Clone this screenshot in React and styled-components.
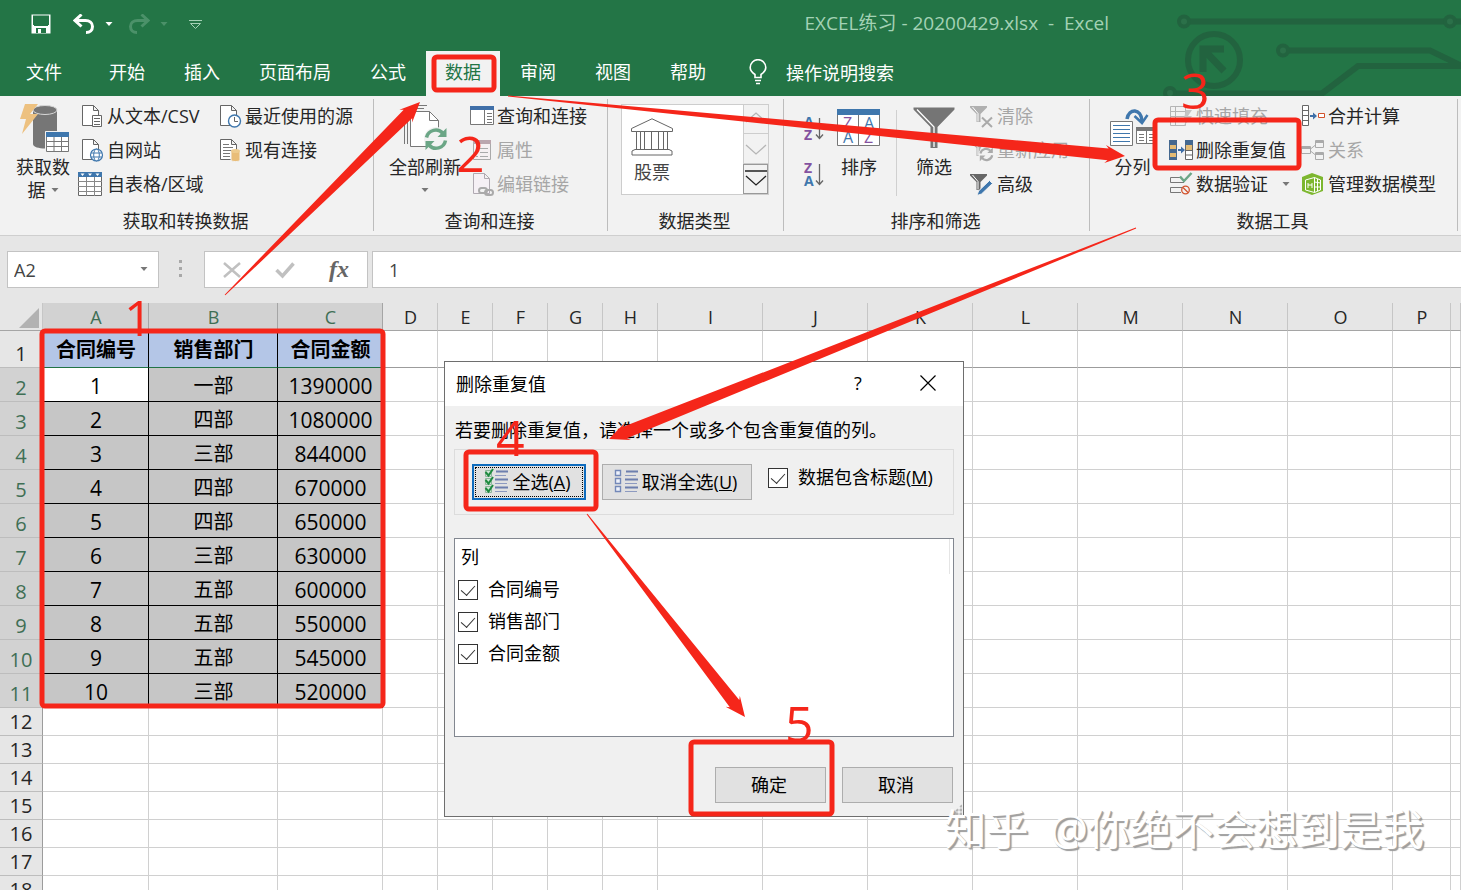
import React from "react";
import styled, { createGlobalStyle, css } from "styled-components";

const GlobalStyle = createGlobalStyle`
  * {
    box-sizing: border-box;
  }
  body {
    margin: 0;
    font-family: "Open Sans", "Noto Sans CJK SC", sans-serif;
    font-size: 18px;
    color: #262626;
  }
  button, input {
    font: inherit;
    color: inherit;
    border: 0;
    background: none;
    padding: 0;
    margin: 0;
  }
`;

/* ---------- icons ---------- */

const SaveIcon = () => (
  <svg width="20" height="20" viewBox="0 0 20 20">
    <path d="M0.500 0.500h19v19h-19z" fill="#fff" />
    <path d="M2 1.500h16v9.500h-1v1H3v-1H2z" fill="#237546" />
    <path d="M5 14h10v5H5z" fill="#237546" />
    <path d="M7 15h3v4H7z" fill="#fff" />
  </svg>
);

const UndoIcon = ({ flip, color }) => (
  <svg width="22" height="20" viewBox="0 0 22 20">
    <g
      transform={flip ? "translate(22 0) scale(-1 1)" : undefined}
      fill="none"
      stroke={color}
      strokeWidth="3"
    >
      <path d="M8.500 0.500L2 6.500l6.500 6" />
      <path d="M2 6.500h10.500c4 0 7 2.500 7 6 0 3.500-2.500 6-6.500 6" />
    </g>
  </svg>
);

const Caret = ({ color = "#777" }) => (
  <svg width="8" height="5" viewBox="0 0 8 5">
    <path d="M0.500 0h7L4 4z" fill={color} />
  </svg>
);

const CustomizeIcon = () => (
  <svg width="13" height="11" viewBox="0 0 13 11" fill="none" stroke="#a3d2b5">
    <path d="M0 1.500h13M1.500 4.500h10l-5 5z" />
  </svg>
);

const BulbIcon = () => (
  <svg width="18" height="26" viewBox="0 0 18 26" fill="none" stroke="#fff" strokeWidth="1.600">
    <path d="M6 18.500v-3C3 13.500 1.200 11.500 1.200 8.500a7.800 7.800 0 0 1 15.600 0c0 3-1.800 5-4.800 7v3z" />
    <path d="M6 21.500h6M7 24.500h4" />
  </svg>
);

const Circuit = () => (
  <svg width="301" height="96" viewBox="0 0 301 96" fill="none" stroke="#22633f" strokeWidth="6">
    <path d="M30 21.500h271M129 50.500h141l31 15M16 93.500h146l36-27.500h103" />
    <g fill="#2b7049" strokeWidth="4">
      <circle cx="24" cy="21.500" r="5" />
      <circle cx="290" cy="21.500" r="5" />
      <circle cx="123" cy="50.500" r="5" />
      <circle cx="10" cy="93" r="5" />
    </g>
    <circle cx="54" cy="60" r="26" />
    <path d="M43 72V49h21M44 50l20 21" strokeWidth="7" />
  </svg>
);

const Sheet = ({ stroke = "#666" }) => (
  <path d="M2.500 1.500h11l5 5v15h-16zM13.500 1.500v5h5" fill="#fff" stroke={stroke} />
);

const Drawing = styled.svg`
  overflow: visible;
`;

const Icon = ({ children, w = 24, h = 24 }) => (
  <Drawing width={w} height={h} viewBox={`0 0 ${w} ${h}`} fill="none">
    {children}
  </Drawing>
);

const GetDataIcon = () => (
  <Icon w={52} h={50}>
    <path d="M16 7v34c0 6 24 6 24 0V7z" fill="#767676" />
    <ellipse cx="28" cy="7" rx="12" ry="4.500" fill="#767676" stroke="#d8d8d8" />
    <path d="M8 1h13l-8 10h8L5 31l4-15H3z" fill="#edc180" />
    <path d="M28.500 28.500h23v21h-23z" fill="#fff" stroke="#f2f2f2" />
    <path d="M29.500 29.500h22v19h-22z" fill="#fff" stroke="#777" />
    <path d="M29 29h23v5H29z" fill="#3f77ad" />
    <path d="M29 38.500h23M29 43.500h23M37 34v15M44.500 34v15" stroke="#777" />
  </Icon>
);

const TextFileIcon = () => (
  <Icon>
    <Sheet />
    <path d="M12.500 11.500h9v11h-9z" fill="#fff" stroke="#666" />
    <path d="M14 14.500h6M14 17.500h6M14 20.500h6" stroke="#666" />
  </Icon>
);

const WebIcon = () => (
  <Icon>
    <Sheet />
    <circle cx="16.500" cy="17" r="6" fill="#fff" stroke="#3f77ad" strokeWidth="1.200" />
    <ellipse cx="16.500" cy="17" rx="2.800" ry="6" stroke="#3f77ad" />
    <path d="M11 15h11M11 19h11" stroke="#3f77ad" />
  </Icon>
);

const TableIcon = () => (
  <Icon>
    <path d="M-1.500 0.500h23v23h-23z" fill="#fff" stroke="#666" />
    <path d="M-2 0h24v5H-2z" fill="#3f77ad" />
    <path d="M0.500 1.500h4l-2 2.500zM8 1.500h4l-2 2.500zM15.500 1.500h4l-2 2.500z" fill="#fff" />
    <path d="M-2 9.500h24M-2 14.500h24M-2 19.500h24M6.500 5v19M14.500 5v19" stroke="#888" />
  </Icon>
);

const RecentIcon = () => (
  <Icon>
    <Sheet />
    <circle cx="16.500" cy="17" r="6" fill="#fff" stroke="#3f77ad" strokeWidth="1.400" />
    <path d="M16.500 13v4.500h3.500" stroke="#666" />
  </Icon>
);

const ConnectionIcon = () => (
  <Icon>
    <Sheet />
    <path d="M5 6.500h6M5 9.500h10M5 12.500h10M5 15.500h7M5 18.500h7" stroke="#777" />
    <path d="M13 13v9c0 2 9 2 9 0v-9z" fill="#e9bd78" stroke="#f2f2f2" />
    <ellipse cx="17.500" cy="13" rx="4.500" ry="2" fill="#eecb8d" />
  </Icon>
);

const RefreshArrows = ({ color }) => (
  <g stroke={color} strokeWidth="3.500" fill="none">
    <path d="M1.500 9.500A9.500 9.500 0 0 1 18 5.500" />
    <path d="M20.500 12.500A9.500 9.500 0 0 1 4 17" />
    <path d="M21.500 0v9h-9zM0.500 22v-9h9z" fill={color} stroke="none" />
  </g>
);

const RefreshAllIcon = () => (
  <Icon w={44} h={48}>
    <path d="M1.500 10v30M4.500 8v32M7 4.500h14M10 1.500h14" stroke="#777" />
    <path d="M7.500 7.500h19l9 9v26h-28z" fill="#fff" stroke="#777" />
    <path d="M26.500 7.500v9h9" stroke="#777" />
    <circle cx="33" cy="35" r="12" fill="#f2f2f2" />
    <g transform="translate(22 24)">
      <RefreshArrows color="#6ba686" />
    </g>
  </Icon>
);

const QueriesIcon = () => (
  <Icon>
    <path d="M0.500 2.500h23v18h-23z" fill="#fff" stroke="#777" />
    <path d="M0 2h24v4H0z" fill="#3f6fa8" />
    <path d="M14.500 6v15M17 9.500h5M17 12.500h5M17 15.500h5M17 18.500h5" stroke="#777" />
  </Icon>
);

const PropertiesIcon = () => (
  <Icon>
    <path d="M3.500 2.500h17v19h-17z" fill="#f6f0f2" stroke="#aaa" />
    <path d="M3 2h18v4H3z" fill="#bba6ae" />
    <path d="M10 10.500h8M10 14.500h8M10 18.500h8M6 10.500h2M6 14.500h2M6 18.500h2" stroke="#aaa" />
  </Icon>
);

const EditLinksIcon = () => (
  <Icon>
    <path d="M3.500 1.500h11l5 5v15h-16zM14.500 1.500v5h5" fill="#f5f0f5" stroke="#b0aab2" />
    <rect x="9" y="16" width="8" height="5" rx="2.500" fill="#f2f2f2" stroke="#aaa" strokeWidth="2" />
    <rect x="15" y="18" width="8" height="5" rx="2.500" stroke="#aaa" strokeWidth="2" />
  </Icon>
);

const BankIcon = () => (
  <Icon w={42} h={38}>
    <g stroke="#666" fill="#fff">
      <path d="M0.500 10.500L21 0.800l20.500 9.700v3h-41z" />
      <path d="M5.500 13.500h4v18h-4zM13.500 13.500v18M20.500 13.500v18M27.500 13.500v18M32.500 13.500h4v18h-4z" />
      <path d="M1 37v-4l3-1.500h34l3 1.500v4z" />
    </g>
  </Icon>
);

const Letter = styled.text`
  font: ${(p) => (p.$bold ? "bold 14px" : "16px")} "Open Sans", sans-serif;
  fill: ${(p) => p.$color};
`;

const SortIcon = ({ top, bottom, topColor, bottomColor }) => (
  <Icon w={22} h={28}>
    <Letter $bold $color={topColor} x="1" y="12">{top}</Letter>
    <Letter $bold $color={bottomColor} x="1" y="25">{bottom}</Letter>
    <path d="M16.500 3v20M13 19.500l3.500 4 3.500-4" stroke="#666" strokeWidth="1.300" />
  </Icon>
);

const SortDialogIcon = () => (
  <Icon w={44} h={38}>
    <path d="M0.500 0.500h42v36h-42z" fill="#fff" stroke="#777" />
    <path d="M0 0h43v6H0z" fill="#3f77ad" />
    <path d="M21.500 6v31" stroke="#777" />
    <Letter $color="#8452a0" x="6" y="20">Z</Letter>
    <Letter $color="#3f77ad" x="6" y="34">A</Letter>
    <Letter $color="#3f77ad" x="27" y="20">A</Letter>
    <Letter $color="#8452a0" x="27" y="34">Z</Letter>
  </Icon>
);

const FilterIcon = () => (
  <Icon w={42} h={42}>
    <path d="M0.500 0.500h41v2L24.500 20v21h-7V20L0.500 2.500z" fill="#757575" />
    <path d="M4 2.500l17 17.500v20" stroke="#fff" strokeWidth="1.300" />
  </Icon>
);

const SmallFunnel = ({ color }) => (
  <>
    <path d="M0 2h17v1.500L10.500 10v8h-4v-8L0 3.500z" fill={color} />
    <path d="M2.500 3l5.500 6.500v8" stroke="#fff" />
  </>
);

const ClearIcon = () => (
  <Icon>
    <SmallFunnel color="#b0b0b0" />
    <path d="M12 13.500l10 9.500M22 13.500L12 23" stroke="#aaa" strokeWidth="2" />
  </Icon>
);

const ReapplyIcon = () => (
  <Icon>
    <SmallFunnel color="#b0b0b0" />
    <circle cx="16" cy="16.500" r="7.500" fill="#f2f2f2" />
    <g transform="translate(9.500 9.500) scale(0.620)">
      <RefreshArrows color="#aaa" />
    </g>
  </Icon>
);

const AdvancedIcon = () => (
  <Icon>
    <SmallFunnel color="#666" />
    <path d="M7 23.500l1.500-4.500L19.500 8.500l3 3L11.500 22z" fill="#3f77ad" stroke="#f2f2f2" />
  </Icon>
);

const SplitIcon = () => (
  <Icon w={46} h={40}>
    <path d="M0.500 13.500h22v24h-22z" fill="#fff" stroke="#777" />
    <path d="M3 17.500h17M3 21.500h17M3 25.500h17M3 29.500h17M3 33.500h17" stroke="#3f77ad" />
    <path d="M26.500 19.500h19v16h-19z" fill="#fff" stroke="#777" />
    <path d="M26 19h20v4H26z" fill="#777" />
    <path d="M36.500 23v13M29 26.500h5M29 29.500h5M29 32.500h5M39 26.500h5M39 29.500h5M39 32.500h5" stroke="#777" />
    <path d="M17 11C19 0 31 0 32 13" stroke="#3f77ad" strokeWidth="3.500" />
    <path d="M24.500 8l7.500 7 5.500-8" stroke="#3f77ad" strokeWidth="2.500" />
  </Icon>
);

const FlashFillIcon = () => (
  <Icon>
    <path d="M1.500 2.500h15v19h-15zM1.500 7.500h15M1.500 12.500h15M1.500 17.500h15M6.500 2.500v19" stroke="#b5b5b5" />
    <path d="M17 6h6l-4 6h4l-8 10 3-8h-3z" fill="#c4c4c4" />
  </Icon>
);

const DedupeIcon = () => (
  <Icon>
    <path d="M0 2h8v20H0z" fill="#44688f" />
    <path d="M1 7h6v4H1zM1 15h6v4H1z" fill="#e3bb74" />
    <path d="M9 11h3V8.500l4 3.500-4 3.500V13H9z" fill="#3f6fa8" />
    <path d="M16.500 2.500h7v19h-7zM16.500 12.500h7M16.500 17h7" fill="#fff" stroke="#666" />
    <path d="M16 2h8v5h-8z" fill="#44688f" />
    <path d="M17 7h6v5h-6z" fill="#e3bb74" />
  </Icon>
);

const ValidateIcon = () => (
  <Icon>
    <path d="M11 5.500H1.500v5H15M13 15.500H1.500v5H12" stroke="#777" />
    <path d="M11 4.500l4 4.500L22.500 1" stroke="#6ba686" strokeWidth="2.500" />
    <circle cx="16.500" cy="18" r="3.800" stroke="#d2532d" strokeWidth="1.300" />
    <path d="M14 15.500l5 5" stroke="#d2532d" strokeWidth="1.300" />
  </Icon>
);

const ConsolidateIcon = () => (
  <Icon>
    <path d="M1.500 1.500h6v20h-6zM1.500 6.500h6M1.500 11.500h6M1.500 16.500h6" fill="#fff" stroke="#666" />
    <path d="M9 11h3V8.500l4 3.500-4 3.500V13H9z" fill="#3f6fa8" />
    <path d="M17.500 9.500h6v4h-6z" fill="#fff" stroke="#d2532d" />
  </Icon>
);

const RelationIcon = () => (
  <Icon>
    <path d="M0.500 8.500h9v7h-9zM14.500 2.500h8v7h-8zM14.500 14.500h8v7h-8z" stroke="#aaa" />
    <path d="M0.500 10h9M14.500 4h8M14.500 16h8" stroke="#aaa" strokeWidth="2" />
    <path d="M9.500 11l5-4M9.500 13l5 4" stroke="#aaa" />
  </Icon>
);

const ModelIcon = () => (
  <Icon>
    <path d="M1 5L11 1l11 4v14l-11 4L1 19z" fill="#7db72f" />
    <path d="M4.500 8l9-2.500v15l-9-2.500z" stroke="#fff" />
    <path d="M13.500 5.500l6 2.500v10l-6 2.500M7 11v5M7 13h4M11 11v5M16.500 7v12M13.500 10l6 1M13.500 15h6" stroke="#fff" />
  </Icon>
);

const ChecklistIcon = ({ checked }) => (
  <Icon w={24} h={24}>
    {[1, 9, 17].map((y) =>
      checked ? (
        <g key={y}>
          <path d={`M1.500 ${y + 0.500}h6v6h-6z`} fill="#cfe6d6" stroke="#8fb59c" />
          <path d={`M1.500 ${y + 2}l3 3.500L9 ${y - 1}`} stroke="#1e8a3f" strokeWidth="2" />
        </g>
      ) : (
        <path key={y} d={`M1.500 ${y + 0.500}h5v5h-5z`} fill="#eef2fb" stroke="#7388b8" strokeWidth="1.400" />
      )
    )}
    <path d="M12 2.500h12M11 10.500h13M11 18.500h13" stroke="#6d7fae" strokeWidth="2" />
    <path d="M11 6.500h11M11 14.500h12M11 22.500h12" stroke="#8d9ac0" />
  </Icon>
);

const Chevron = ({ up, bar, color }) => (
  <Icon w={22} h={18}>
    {bar && <path d="M0 1h22" stroke={color} strokeWidth="1.500" />}
    <path d={up ? "M1 12L11 3l10 9" : "M1 6l10 9 10-9"} stroke={color} strokeWidth="1.300" />
  </Icon>
);

/* ---------- window chrome ---------- */

const Window = styled.div`
  position: relative;
  display: flex;
  flex-direction: column;
  height: 100vh;
  overflow: hidden;
  background: #fff;
`;

const Header = styled.header`
  position: relative;
  background: #237546;
  color: #fff;
`;

const HeaderArt = styled.div`
  position: absolute;
  top: 0;
  right: 0;
  height: 96px;
`;

const TitleBar = styled.div`
  display: flex;
  align-items: center;
  height: 51px;
  padding: 0 352px 3px 31px;
`;

const QuickButton = styled.button`
  display: flex;
  align-items: center;
  height: 24px;
  margin-right: ${(p) => p.$after}px;
`;

const Title = styled.div`
  margin-left: auto;
  padding-bottom: 2px;
  font-size: 19px;
  color: #a3d2b5;
  white-space: pre;
  line-height: 24px;
`;

const Tabs = styled.nav`
  display: flex;
  gap: 1px;
  height: 45px;
  padding-left: 7px;
`;

const Tab = styled.button`
  padding: 0 19px 2px;
  line-height: 43px;
  color: ${(p) => (p.$active ? "#237546" : "#fff")};
  background: ${(p) => (p.$active ? "#f2f2f2" : "transparent")};
  &:first-child {
    margin-right: 8px;
  }
`;

const TellMe = styled.button`
  display: flex;
  align-items: center;
  gap: 19px;
  margin-left: 23px;
  padding-bottom: 3px;
  color: #fff;
`;

/* ---------- ribbon ---------- */

const Ribbon = styled.div`
  display: flex;
  height: 140px;
  padding: 3px 0 4px;
  background: #f2f2f2;
  border-bottom: 1px solid #cfcfcf;
  white-space: nowrap;
`;

const GroupBox = styled.section`
  display: flex;
  flex-direction: column;
  flex: 0 0 ${(p) => p.$width}px;
  border-right: 1px solid #bdbdbd;
`;

const GroupBody = styled.div`
  display: flex;
  flex: 1;
  padding-left: ${(p) => p.$pad}px;
`;

const GroupLabel = styled.div`
  padding: 2px 2px 0 0;
  text-align: center;
  line-height: 20px;
`;

const Group = ({ label, width, pad = 12, children }) => (
  <GroupBox $width={width}>
    <GroupBody $pad={pad}>{children}</GroupBody>
    <GroupLabel>{label}</GroupLabel>
  </GroupBox>
);

const BigButtonBox = styled.button`
  display: flex;
  flex-direction: column;
  align-items: center;
  width: ${(p) => p.$width}px;
  line-height: 23px;
`;

const BigIcon = styled.span`
  display: flex;
  align-items: center;
  justify-content: center;
  height: 57px;
`;

const BigLine = styled.span`
  display: flex;
  align-items: center;
  justify-content: center;
  gap: 5px;
  height: 23px;
`;

const BigButton = ({ icon, width, lines, caret }) => (
  <BigButtonBox $width={width}>
    <BigIcon>{icon}</BigIcon>
    {lines.map((line, i) => (
      <BigLine key={i}>
        {line}
        {caret && i === lines.length - 1 && <Caret />}
      </BigLine>
    ))}
  </BigButtonBox>
);

const Column = styled.div`
  display: flex;
  flex-direction: column;
  width: ${(p) => (p.$width ? `${p.$width}px` : "auto")};
  margin-left: ${(p) => p.$gap || 0}px;
`;

const SmallButton = styled.button`
  display: grid;
  grid-template-columns: 25px auto auto;
  justify-content: start;
  align-items: center;
  column-gap: 2px;
  height: 34px;
  text-align: left;
  line-height: 24px;
  color: ${(p) => (p.disabled ? "#a6a6a6" : "#262626")};
  svg {
    display: block;
  }
  span + svg {
    margin-left: 12px;
  }
`;

const Action = ({ icon, children, caret, disabled }) => (
  <SmallButton disabled={disabled}>
    {icon}
    <span>{children}</span>
    {caret && <Caret />}
  </SmallButton>
);

const Gallery = styled.div`
  display: flex;
  height: 91px;
  margin-top: 5px;
  border: 1px solid #cdcdcd;
  background: #fff;
`;

const GalleryItem = styled.button`
  display: flex;
  flex-direction: column;
  align-items: flex-start;
  width: 121px;
  padding: 13px 0 0 9px;
  line-height: 24px;
  color: #444;
  span {
    margin: 4px 0 0 3px;
  }
`;

const GalleryScroll = styled.div`
  display: flex;
  flex-direction: column;
  width: 25px;
  background: #f2f2f2;
  button {
    display: flex;
    align-items: center;
    justify-content: center;
    flex: 1;
    border-left: 1px solid #cdcdcd;
    border-bottom: 1px solid #cdcdcd;
  }
  button:last-child {
    border: 1px solid #999;
  }
`;

const SortButton = styled.button`
  display: flex;
  align-items: center;
  width: 30px;
  height: 46px;
  padding-left: 5px;
  &:first-child {
    margin-top: 7px;
  }
`;

const InnerRule = styled.div`
  width: 1px;
  height: 86px;
  margin: 11px 7px 0 8px;
  background: #d0d0d0;
`;

/* ---------- formula bar ---------- */

const FormulaBar = styled.div`
  display: flex;
  align-items: stretch;
  height: 67px;
  padding: 15px 0;
  background: #e6e6e6;
`;

const Field = styled.div`
  display: flex;
  align-items: center;
  background: #fff;
  border: 1px solid #c3c3c3;
`;

const NameBox = styled(Field)`
  width: 152px;
  margin-left: 7px;
  padding: 0 10px 0 6px;
  input {
    flex: 1;
    width: 0;
    color: #444;
  }
  button {
    display: flex;
  }
`;

const Dots = styled.div`
  display: flex;
  flex-direction: column;
  justify-content: center;
  gap: 4px;
  width: 3px;
  margin: 0 22px 0 20px;
  padding-bottom: 2px;
  i {
    height: 3px;
    background: #a8a8a8;
  }
`;

const FormulaTools = styled(Field)`
  width: 164px;
  padding: 0 18px;
  justify-content: space-between;
  button {
    display: flex;
  }
`;

const Fx = styled.button`
  font: italic bold 24px "Liberation Serif", serif;
  color: #666;
`;

const FormulaField = styled(Field)`
  flex: 1;
  margin-left: 4px;
  border-right: 0;
  padding-left: 16px;
  input {
    width: 100%;
    color: #444;
  }
`;

/* ---------- worksheet ---------- */

const SheetArea = styled.main`
  flex: 1;
  min-height: 0;
  overflow: hidden;
`;

const Grid = styled.table`
  width: 100%;
  table-layout: fixed;
  border-collapse: separate;
  border-spacing: 0;
  th,
  td {
    padding: 0;
    overflow: hidden;
    white-space: nowrap;
    text-align: center;
    font-weight: 400;
    color: #000;
  }
`;

const Row = styled.tr`
  height: ${(p) => p.$height}px;
`;

const ColHead = styled.th`
  height: 28px;
  && {
    padding: 2px 0 0 1px;
  }
  line-height: 25px;
  font-size: 18px;
  background: ${(p) => (p.$on ? "#d2d2d2" : "#e6e6e6")};
  border-right: 1px solid ${(p) => (p.$on ? "#a5a5a5" : "#c6c6c6")};
  border-bottom: 1px solid #a5a5a5;
  && {
    color: ${(p) => (p.$on ? "#3f6f55" : "#262626")};
  }
`;

const Corner = styled(ColHead)`
  text-align: right;
  svg {
    display: block;
    margin: 0 3px 0 auto;
  }
`;

const RowHead = styled.th`
  font-size: 20px;
  line-height: 26px;
  vertical-align: bottom;
  background: ${(p) => (p.$on ? "#d2d2d2" : "#e6e6e6")};
  border-right: 1px solid #9c9c9c;
  border-bottom: 1px solid #bdbdbd;
  && {
    color: ${(p) => (p.$on ? "#3f6f55" : "#262626")};
  }
`;

const Cell = styled.td`
  border-right: 1px solid #d0d0d0;
  border-bottom: 1px solid ${(p) => (p.$frozen ? "#9c9c9c" : "#d0d0d0")};
`;

const DataCell = styled(Cell)`
  && {
    padding: 3px 0 0 1px;
  }
  font-size: ${(p) => (p.$number ? 21 : 20)}px;
  line-height: 28px;
  background: ${(p) => (p.$current ? "#fff" : "#c6c6c6")};
  border-right-color: #000;
  border-bottom-color: #000;
  ${(p) =>
    p.$title &&
    css`
      background: #b4c6e7;
      border-bottom: 1px solid #217346;
      && {
        padding-top: 1px;
        font-weight: 700;
      }
    `}
`;

/* ---------- dialog ---------- */

const Dialog = styled.div`
  position: absolute;
  left: 444px;
  top: 361px;
  width: 520px;
  border: 1px solid #6e6e6e;
  background: #f0f0f0;
  color: #000;
  white-space: nowrap;
`;

const DialogTitle = styled.div`
  display: flex;
  align-items: center;
  height: 44px;
  padding: 0 26px 2px 11px;
  background: #fff;
  button {
    display: flex;
    justify-content: center;
    width: 18px;
  }
  button:first-of-type {
    margin-left: auto;
    margin-right: 52px;
  }
`;

const DialogBody = styled.div`
  padding: 9px;
`;

const Prompt = styled.p`
  margin: 0;
  height: 34px;
  padding-left: 1px;
  line-height: 30px;
`;

const SelectBar = styled.div`
  display: flex;
  align-items: flex-start;
  gap: 16px;
  height: 66px;
  padding: 14px 17px;
  border: 1px solid #dcdcdc;
`;

const DialogButton = styled.button`
  display: flex;
  align-items: center;
  justify-content: center;
  gap: 4px;
  height: 36px;
  width: ${(p) => p.$width}px;
  padding: 0 3px 2px 0;
  background: #e1e1e1;
  border: 1px solid #adadad;
  ${(p) =>
    p.$focused &&
    css`
      border: 2px solid #0f6cbd;
      outline: 1px dotted #000;
      outline-offset: -4px;
    `}
`;

const CheckLabel = styled.label`
  display: flex;
  align-items: center;
  gap: 10px;
  height: ${(p) => p.$height}px;
  line-height: 24px;
  span {
    padding-bottom: 2px;
  }
`;

const Checkbox = styled.input`
  appearance: none;
  display: flex;
  justify-content: center;
  width: 20px;
  height: 20px;
  background: #fff;
  border: 1px solid #333;
  &:checked::after {
    content: "";
    width: 7px;
    height: 12px;
    margin-top: 1px;
    border: solid #333;
    border-width: 0 1px 1px 0;
    transform: rotate(42deg);
  }
`;

const ColumnList = styled.div`
  height: 199px;
  margin-top: 23px;
  padding: 0 3px;
  background: #fff;
  border: 1px solid #828790;
`;

const ListHead = styled.div`
  height: 35px;
  padding-left: 3px;
  line-height: 37px;
  border-right: 1px solid #e5e5e5;
`;

const DialogFooter = styled.div`
  display: flex;
  justify-content: flex-end;
  gap: 16px;
  padding: 30px 1px 4px;
`;

const Grip = styled.span`
  position: absolute;
  right: 1px;
  bottom: 1px;
  width: 11px;
  height: 11px;
  background: radial-gradient(circle, #b5b5b5 1px, transparent 2px) 0 0 / 4px 4px;
  clip-path: polygon(100% 0, 100% 100%, 0 100%);
`;

/* ---------- mark-up drawn over the window ---------- */

const Marks = styled.svg`
  position: absolute;
  inset: 0;
  width: 100%;
  height: 100%;
  pointer-events: none;
`;

const StepNumber = styled.span`
  position: absolute;
  left: ${(p) => p.$x}px;
  top: ${(p) => p.$y}px;
  font-size: 50px;
  line-height: 50px;
  color: #f5261a;
  pointer-events: none;
`;

const Watermark = styled.div`
  position: absolute;
  right: 37px;
  bottom: 35px;
  font-size: 42px;
  line-height: 52px;
  white-space: pre;
  color: #fff;
  text-shadow: 1px 1px 0 #a5a5a5, 2px 2px 1px #999;
  pointer-events: none;
`;

const RED = "#f5261a";

const arrows = [
  { from: [225, 295], to: [420, 102] },
  { from: [508, 96], to: [1125, 156] },
  { from: [1136, 228], to: [609, 439] },
  { from: [587, 514], to: [745, 717] },
];

const frames = [
  [434, 57, 60, 33],
  [1155, 120, 144, 48],
  [42, 331, 341, 375],
  [466, 452, 130, 57],
  [691, 742, 141, 72],
];

const steps = [
  [1, 124, 292],
  [2, 456, 128],
  [3, 1181, 65],
  [4, 496, 412],
  [5, 785, 698],
];

// thin at the tail, widest just behind the barbed head
function arrowPoints({ from, to }) {
  const dx = to[0] - from[0];
  const dy = to[1] - from[1];
  const len = Math.hypot(dx, dy);
  const ux = dx / len;
  const uy = dy / len;
  const at = (back, side) =>
    `${to[0] - ux * back - uy * side},${to[1] - uy * back + ux * side}`;
  return [
    at(len, 0.5),
    at(17, 6),
    at(20, 9),
    at(0, 0),
    at(20, -9),
    at(17, -6),
    at(len, -0.5),
  ].join(" ");
}

/* ---------- data ---------- */

const columns = [
  ["A", 106],
  ["B", 129],
  ["C", 105],
  ["D", 55],
  ["E", 55],
  ["F", 55],
  ["G", 55],
  ["H", 55],
  ["I", 105],
  ["J", 105],
  ["K", 105],
  ["L", 105],
  ["M", 105],
  ["N", 105],
  ["O", 105],
  ["P", 58],
  ["", null],
];

const titles = ["合同编号", "销售部门", "合同金额"];

const records = [
  [1, "一部", 1390000],
  [2, "四部", 1080000],
  [3, "三部", 844000],
  [4, "四部", 670000],
  [5, "四部", 650000],
  [6, "三部", 630000],
  [7, "五部", 600000],
  [8, "五部", 550000],
  [9, "五部", 545000],
  [10, "三部", 520000],
];

const emptyRows = [12, 13, 14, 15, 16, 17, 18];

const blanks = (count, frozen) =>
  Array.from({ length: count }, (_, i) => <Cell key={`b${i}`} $frozen={frozen} />);

const Worksheet = () => (
  <SheetArea>
    <Grid>
      <colgroup>
        <col style={{ width: 43 }} />
        {columns.map(([name, width]) => (
          <col key={name} style={width ? { width } : undefined} />
        ))}
      </colgroup>
      <thead>
        <Row $height={28}>
          <Corner>
            <svg width="20" height="20" viewBox="0 0 20 20">
              <path d="M20 0v20H0z" fill="#b2b2b2" />
            </svg>
          </Corner>
          {columns.map(([name], i) => (
            <ColHead key={name} $on={i < 3}>
              {name}
            </ColHead>
          ))}
        </Row>
      </thead>
      <tbody>
        <Row $height={37}>
          <RowHead>1</RowHead>
          {titles.map((t) => (
            <DataCell key={t} $title>
              {t}
            </DataCell>
          ))}
          {blanks(14, true)}
        </Row>
        {records.map((record, r) => (
          <Row key={r} $height={34}>
            <RowHead $on>{r + 2}</RowHead>
            {record.map((value, c) => (
              <DataCell key={c} $number={c !== 1} $current={r === 0 && c === 0}>
                {value}
              </DataCell>
            ))}
            {blanks(14)}
          </Row>
        ))}
        {emptyRows.map((n) => (
          <Row key={n} $height={28}>
            <RowHead>{n}</RowHead>
            {blanks(17)}
          </Row>
        ))}
      </tbody>
    </Grid>
  </SheetArea>
);

const RemoveDuplicates = () => (
  <Dialog role="dialog" aria-labelledby="dialog-title">
    <DialogTitle>
      <span id="dialog-title">删除重复值</span>
      <button>?</button>
      <button aria-label="关闭">
        <svg width="16" height="16" viewBox="0 0 16 16" stroke="#000" strokeWidth="1.200">
          <path d="M0.500 0.500l15 15M15.500 0.500l-15 15" />
        </svg>
      </button>
    </DialogTitle>
    <DialogBody>
      <Prompt>若要删除重复值，请选择一个或多个包含重复值的列。</Prompt>
      <SelectBar>
        <DialogButton $width={114} $focused>
          <ChecklistIcon checked />
          <span>
            全选(<u>A</u>)
          </span>
        </DialogButton>
        <DialogButton $width={150}>
          <ChecklistIcon />
          <span>
            取消全选(<u>U</u>)
          </span>
        </DialogButton>
        <CheckLabel $height={28}>
          <Checkbox type="checkbox" defaultChecked />
          <span>
            数据包含标题(<u>M</u>)
          </span>
        </CheckLabel>
      </SelectBar>
      <ColumnList>
        <ListHead>列</ListHead>
        {titles.map((t) => (
          <CheckLabel key={t} $height={32}>
            <Checkbox type="checkbox" defaultChecked />
            <span>{t}</span>
          </CheckLabel>
        ))}
      </ColumnList>
      <DialogFooter>
        <DialogButton $width={111}>确定</DialogButton>
        <DialogButton $width={111}>取消</DialogButton>
      </DialogFooter>
    </DialogBody>
    <Grip />
  </Dialog>
);

const App = () => (
  <Window>
    <GlobalStyle />
    <Header>
      <HeaderArt>
        <Circuit />
      </HeaderArt>
      <TitleBar>
        <QuickButton $after={22} aria-label="保存">
          <SaveIcon />
        </QuickButton>
        <QuickButton $after={10} aria-label="撤消">
          <UndoIcon color="#fff" />
        </QuickButton>
        <QuickButton $after={15} aria-label="撤消列表">
          <Caret color="#fff" />
        </QuickButton>
        <QuickButton $after={10} aria-label="恢复">
          <UndoIcon flip color="#4b9169" />
        </QuickButton>
        <QuickButton $after={21} aria-label="恢复列表">
          <Caret color="#4b9169" />
        </QuickButton>
        <QuickButton $after={0} aria-label="自定义">
          <CustomizeIcon />
        </QuickButton>
        <Title>{"EXCEL练习 - 20200429.xlsx  -  Excel"}</Title>
      </TitleBar>
      <Tabs>
        {["文件", "开始", "插入", "页面布局", "公式", "数据", "审阅", "视图", "帮助"].map((t) => (
          <Tab key={t} $active={t === "数据"}>
            {t}
          </Tab>
        ))}
        <TellMe>
          <BulbIcon />
          操作说明搜索
        </TellMe>
      </Tabs>
    </Header>

    <Ribbon>
      <Group label="获取和转换数据" width={374}>
        <BigButton icon={<GetDataIcon />} width={62} lines={["获取数", "据"]} caret />
        <Column $gap={6} $width={138}>
          <Action icon={<TextFileIcon />}>从文本/CSV</Action>
          <Action icon={<WebIcon />}>自网站</Action>
          <Action icon={<TableIcon />}>自表格/区域</Action>
        </Column>
        <Column>
          <Action icon={<RecentIcon />}>最近使用的源</Action>
          <Action icon={<ConnectionIcon />}>现有连接</Action>
        </Column>
      </Group>
      <Group label="查询和连接" width={234}>
        <BigButton icon={<RefreshAllIcon />} width={78} lines={["全部刷新", ""]} caret />
        <Column $gap={6}>
          <Action icon={<QueriesIcon />}>查询和连接</Action>
          <Action icon={<PropertiesIcon />} disabled>属性</Action>
          <Action icon={<EditLinksIcon />} disabled>编辑链接</Action>
        </Column>
      </Group>
      <Group label="数据类型" width={176} pad={13}>
        <Gallery>
          <GalleryItem>
            <BankIcon />
            <span>股票</span>
          </GalleryItem>
          <GalleryScroll>
            <button aria-label="上一行">
              <Chevron up color="#b5b5b5" />
            </button>
            <button aria-label="下一行">
              <Chevron color="#b5b5b5" />
            </button>
            <button aria-label="更多">
              <Chevron bar color="#222" />
            </button>
          </GalleryScroll>
        </Gallery>
      </Group>
      <Group label="排序和筛选" width={306} pad={14}>
        <Column $width={32}>
          <SortButton aria-label="升序">
            <SortIcon top="A" bottom="Z" topColor="#3f77ad" bottomColor="#8452a0" />
          </SortButton>
          <SortButton aria-label="降序">
            <SortIcon top="Z" bottom="A" topColor="#8452a0" bottomColor="#3f77ad" />
          </SortButton>
        </Column>
        <BigButton icon={<SortDialogIcon />} width={58} lines={["排序"]} />
        <InnerRule />
        <BigButton icon={<FilterIcon />} width={60} lines={["筛选"]} />
        <Column $gap={6}>
          <Action icon={<ClearIcon />} disabled>清除</Action>
          <Action icon={<ReapplyIcon />} disabled>重新应用</Action>
          <Action icon={<AdvancedIcon />}>高级</Action>
        </Column>
      </Group>
      <Group label="数据工具" width={368}>
        <BigButton icon={<SplitIcon />} width={61} lines={["分列"]} />
        <Column $gap={6} $width={132}>
          <Action icon={<FlashFillIcon />} disabled>快速填充</Action>
          <Action icon={<DedupeIcon />}>删除重复值</Action>
          <Action icon={<ValidateIcon />} caret>数据验证</Action>
        </Column>
        <Column>
          <Action icon={<ConsolidateIcon />}>合并计算</Action>
          <Action icon={<RelationIcon />} disabled>关系</Action>
          <Action icon={<ModelIcon />}>管理数据模型</Action>
        </Column>
      </Group>
    </Ribbon>

    <FormulaBar>
      <NameBox>
        <input aria-label="名称框" defaultValue="A2" />
        <button aria-label="名称列表">
          <Caret />
        </button>
      </NameBox>
      <Dots>
        <i />
        <i />
        <i />
      </Dots>
      <FormulaTools>
        <button aria-label="取消输入">
          <Icon w={18} h={16}>
            <path d="M1 1l16 14M17 1L1 15" stroke="#c0c0c0" strokeWidth="2.500" />
          </Icon>
        </button>
        <button aria-label="输入">
          <Icon w={20} h={16}>
            <path d="M1.500 8l6 6L18.500 1.500" stroke="#c0c0c0" strokeWidth="3.500" />
          </Icon>
        </button>
        <Fx aria-label="插入函数">fx</Fx>
      </FormulaTools>
      <FormulaField>
        <input aria-label="编辑栏" defaultValue="1" />
      </FormulaField>
    </FormulaBar>

    <Worksheet />
    <RemoveDuplicates />

    <Watermark>{"知乎  @你绝不会想到是我"}</Watermark>
    {steps.map(([n, x, y]) => (
      <StepNumber key={n} $x={x} $y={y}>
        {n}
      </StepNumber>
    ))}
    <Marks>
      {frames.map(([x, y, w, h]) => (
        <rect key={x} x={x} y={y} width={w} height={h} rx="3" fill="none" stroke={RED} strokeWidth="5" />
      ))}
      {arrows.map((a) => (
        <polygon key={a.from[0]} points={arrowPoints(a)} fill={RED} />
      ))}
    </Marks>
  </Window>
);

export default App;
